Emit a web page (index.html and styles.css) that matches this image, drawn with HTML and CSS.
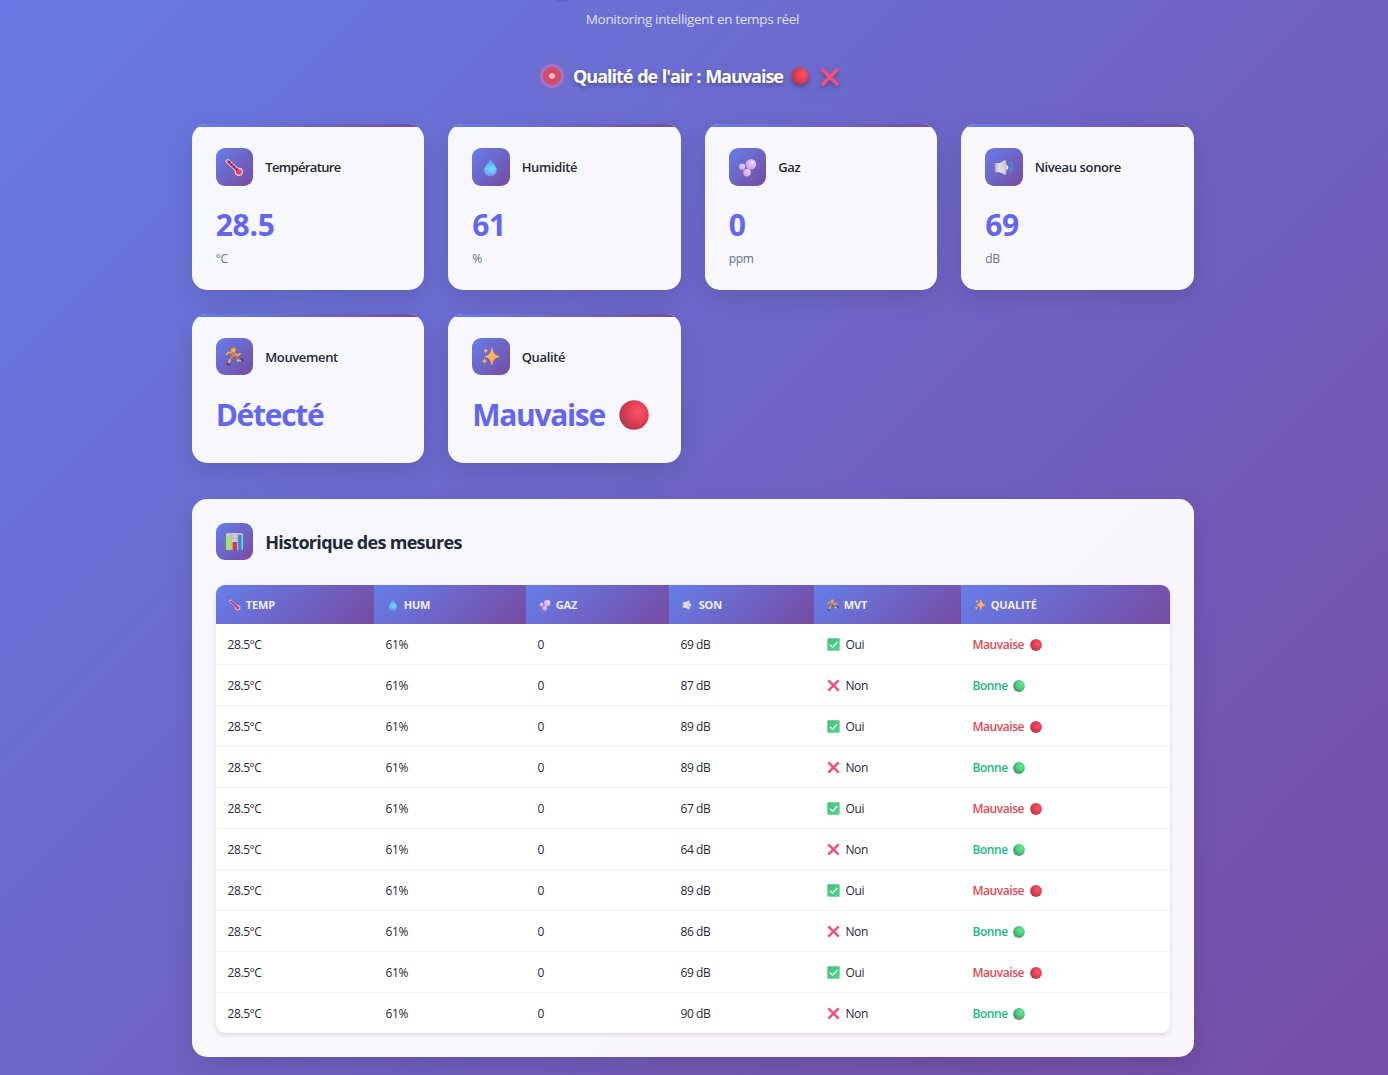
FILE: index.html
```html
<!DOCTYPE html>
<html lang="fr">
<head>
<meta charset="utf-8">
<title>Qualité de l'air</title>
<link rel="stylesheet" href="styles.css">
</head>
<body>
<svg class="sprite" width="0" height="0" aria-hidden="true">
  <defs>
    <radialGradient id="g-red" cx=".65" cy=".4" r=".68"><stop offset="0" stop-color="#fb5467"/><stop offset=".6" stop-color="#dd3c50"/><stop offset="1" stop-color="#ab3a4e"/></radialGradient>
    <radialGradient id="g-green" cx=".65" cy=".35" r=".7"><stop offset="0" stop-color="#65ec8f"/><stop offset=".55" stop-color="#4dc87c"/><stop offset="1" stop-color="#478a6b"/></radialGradient>
    <linearGradient id="g-drop" x1="0" y1="0" x2="0" y2="1"><stop offset="0" stop-color="#4a9fe0"/><stop offset=".55" stop-color="#62cdfb"/><stop offset="1" stop-color="#7b8df5"/></linearGradient>
    <radialGradient id="g-bubble" cx=".65" cy=".35" r=".75"><stop offset="0" stop-color="#e2dcfa"/><stop offset=".5" stop-color="#d2b3ee"/><stop offset="1" stop-color="#f29ce0"/></radialGradient>
    <linearGradient id="g-star" x1="0" y1="0" x2="1" y2="1"><stop offset="0" stop-color="#ffc55a"/><stop offset="1" stop-color="#ff9f55"/></linearGradient>
    <linearGradient id="g-horn" x1="0" y1="0" x2="1" y2="0"><stop offset="0" stop-color="#b3a9b9"/><stop offset=".4" stop-color="#e5e0e8"/><stop offset="1" stop-color="#d2cad8"/></linearGradient>
    <linearGradient id="g-check" x1="0" y1="0" x2="1" y2="1"><stop offset="0" stop-color="#4bbd80"/><stop offset="1" stop-color="#48d989"/></linearGradient>
  </defs>
  <symbol id="thermo" viewBox="0 0 20 20">
    <path d="M3 3.4 13.8 13.6" stroke="#e6dcf5" stroke-width="4.6" stroke-linecap="round"/>
    <circle cx="14.6" cy="14.6" r="4.3" fill="#e6dcf5"/>
    <path d="M3.1 3.5 14 14" stroke="#e2365f" stroke-width="2.8" stroke-linecap="round"/>
    <circle cx="14.6" cy="14.6" r="3.1" fill="#f3345c"/>
    <path d="M5.4 3.500 3.600 5.200M8 6 6.300 7.700M10.600 8.500 8.900 10.200M13.200 11l-1.700 1.700" stroke="#4a2b72" stroke-width="1.4"/>
    <circle cx="15.3" cy="13.5" r=".8" fill="#ff829b"/>
  </symbol>
  <symbol id="drop" viewBox="0 0 20 20">
    <path d="M10 .8C8 5 3.4 9 3.4 13a6.6 6.4 0 0 0 13.2 0C16.600 9 12 5 10 .8Z" fill="url(#g-drop)"/>
    <ellipse cx="11.500" cy="12" rx="3" ry="4" fill="#86dcff" opacity=".5"/>
  </symbol>
  <symbol id="bubbles" viewBox="0 0 20 20">
    <circle cx="13.700" cy="6.600" r="5.500" fill="url(#g-bubble)"/>
    <circle cx="4.300" cy="9.100" r="3.300" fill="url(#g-bubble)"/>
    <circle cx="9.500" cy="15.400" r="4" fill="url(#g-bubble)"/>
    <circle cx="15" cy="4.800" r="1.400" fill="#f5efff" opacity=".8"/>
  </symbol>
  <symbol id="speaker" viewBox="0 0 20 20">
    <path d="M.8 5.200h5.200L11.800 2.200v15.600L6 14.900H.8Z" fill="url(#g-horn)"/>
    <path d="M11.600 2.100q1.700 0 1.700 7.900t-1.700 7.900Z" fill="#c6bccc"/>
    <path d="M12.800 7.600a2.400 2.400 0 0 1 0 4.800Z" fill="#eee9f1"/>
    <path d="M15.800 5.600c1.700 2.700 1.700 6.200 0 8.900M17.800 3.700c2 3.700 2 8.900 0 12.600" fill="none" stroke="#389be8" stroke-width="1.100" stroke-linecap="round"/>
  </symbol>
  <symbol id="runner" viewBox="0 0 20 20">
    <path d="m7.400 11.500-3 3.700-1.200 2.700M11 11.400l3 3.300 3.300-1" fill="none" stroke="#f7b64f" stroke-width="2" stroke-linejoin="round"/>
    <path d="M7.300 5.700 3.600 5.900 1.500 7.900M10.800 7l2.600 2.200 2.500-2.300" fill="none" stroke="#f7ad42" stroke-width="1.800" stroke-linejoin="round" stroke-linecap="round"/>
    <path d="m6.700 4.700 4 1 1 5.500-3.600 2.100-2.500-2 1.500-3.600Z" fill="#f07347"/>
    <path d="m8 10.500 3.400-.5 1.600 3.500-1.800.8-2.600-1.500-1.800 1.800-1.200-1Z" fill="#637193"/>
    <circle cx="8.900" cy="3" r="2.500" fill="#ffb638"/>
    <path d="M6.400 2.300Q7 0 9.300.3q2.100 0 2.200 2L8 2Z" fill="#d58a2b"/>
    <path d="m2 17.100 2.700 1.600M16.800 12.500l2 1.800" stroke="#4c3b62" stroke-width="1.800" stroke-linecap="round"/>
  </symbol>
  <symbol id="sparkles" viewBox="0 0 20 20" fill="url(#g-star)">
    <path d="M12 1.300c1 5.400 2.200 6.700 7.300 8.100.6.200.6.900 0 1.100-5.100 1.400-6.300 2.700-7.300 8.100-.1.600-.9.600-1 0-1-5.400-2.200-6.700-6.300-8.100-.6-.2-.6-.9 0-1.100 4.100-1.400 5.300-2.700 6.300-8.100.1-.600.9-.600 1 0Z"/>
    <path d="M5 .8c.4 2 .9 2.500 2.600 3-.1.500-2.100.8-2.600 3-.5-2.200-2.200-2.500-2.600-3 1.700-.5 2.200-1 2.600-3ZM3.800 11.300c.5 2.300 1 2.800 3 3.300-.3.500-2.400 1-3 3.400-.6-2.400-2.700-2.900-3-3.400 2-.5 2.500-1 3-3.300Z"/>
  </symbol>
  <symbol id="chart" viewBox="0 0 20 20">
    <rect x="1" y="1" width="18" height="18" rx="2" fill="#cfc6d8"/>
    <path d="M1 6.500h18M1 12.500h18M7 1v18M13.300 1v18" stroke="#a89bb5" stroke-width=".6"/>
    <path d="M2 4.500h5V19H3a2 2 0 0 1-2-2V5.500a1 1 0 0 1 1-1Z" fill="#9be26f"/>
    <path d="M8 10.500h4.600V19H8Z" fill="#da315f"/>
    <path d="M13.800 3H18v16h-4.200Z" fill="#298ddb"/>
    <path d="M16.800 3H18v16h-1.200Z" fill="#46b7f0"/>
  </symbol>
  <symbol id="cross" viewBox="0 0 20 20"><path d="m2 2 16 16m0-16-16 16" stroke="#f5507b" stroke-width="3.800"/></symbol>
  <symbol id="check" viewBox="0 0 20 20"><rect x=".5" y=".5" width="19" height="19" rx="1.500" fill="url(#g-check)"/><path d="m4.500 10.200 4 4 7.500-8" fill="none" stroke="#f1fff6" stroke-width="2"/></symbol>
  <symbol id="red" viewBox="0 0 20 20"><circle cx="10" cy="10" r="9.800" fill="url(#g-red)"/></symbol>
  <symbol id="green" viewBox="0 0 20 20"><circle cx="10" cy="10" r="9.800" fill="url(#g-green)"/></symbol>
</svg>

<header class="page-header">
  <span class="title-mark"></span>
  <p class="subtitle">Monitoring intelligent en temps réel</p>
  <div class="status">
    <span class="status-dot"></span>
    <span class="status-text">Qualité de l'air : Mauvaise</span>
    <svg class="status-ball"><use href="#red"/></svg>
    <svg class="status-cross"><use href="#cross"/></svg>
  </div>
</header>

<main class="container">
  <section class="cards">
    <article class="card">
      <div class="card-head"><span class="tile"><svg><use href="#thermo"/></svg></span><h3 class="label label-tight">Température</h3></div>
      <div class="value">28.5</div><div class="unit">°C</div>
    </article>
    <article class="card">
      <div class="card-head"><span class="tile"><svg><use href="#drop"/></svg></span><h3 class="label">Humidité</h3></div>
      <div class="value">61</div><div class="unit">%</div>
    </article>
    <article class="card">
      <div class="card-head"><span class="tile"><svg><use href="#bubbles"/></svg></span><h3 class="label">Gaz</h3></div>
      <div class="value">0</div><div class="unit">ppm</div>
    </article>
    <article class="card">
      <div class="card-head"><span class="tile"><svg><use href="#speaker"/></svg></span><h3 class="label">Niveau sonore</h3></div>
      <div class="value">69</div><div class="unit">dB</div>
    </article>
    <article class="card">
      <div class="card-head"><span class="tile"><svg><use href="#runner"/></svg></span><h3 class="label">Mouvement</h3></div>
      <div class="value value-word">Détecté</div>
    </article>
    <article class="card">
      <div class="card-head"><span class="tile"><svg><use href="#sparkles"/></svg></span><h3 class="label">Qualité</h3></div>
      <div class="value value-word">Mauvaise<svg class="value-ball"><use href="#red"/></svg></div>
    </article>
  </section>

  <section class="history">
    <div class="card-head"><span class="tile"><svg><use href="#chart"/></svg></span><h2 class="history-title">Historique des mesures</h2></div>
    <div class="table-wrap">
      <table>
        <colgroup><col class="c1"><col class="c2"><col class="c3"><col class="c4"><col class="c5"><col class="c6"></colgroup>
        <thead><tr>
          <th><svg><use href="#thermo"/></svg>TEMP</th>
          <th><svg><use href="#drop"/></svg>HUM</th>
          <th><svg><use href="#bubbles"/></svg>GAZ</th>
          <th><svg><use href="#speaker"/></svg>SON</th>
          <th><svg><use href="#runner"/></svg>MVT</th>
          <th><svg><use href="#sparkles"/></svg>QUALITÉ</th>
        </tr></thead>
        <tbody>
          <tr><td>28.5°C</td><td>61%</td><td>0</td><td>69 dB</td><td><svg class="mark"><use href="#check"/></svg>Oui</td><td class="bad">Mauvaise<svg><use href="#red"/></svg></td></tr>
          <tr><td>28.5°C</td><td>61%</td><td>0</td><td>87 dB</td><td><svg class="mark"><use href="#cross"/></svg>Non</td><td class="good">Bonne<svg><use href="#green"/></svg></td></tr>
          <tr><td>28.5°C</td><td>61%</td><td>0</td><td>89 dB</td><td><svg class="mark"><use href="#check"/></svg>Oui</td><td class="bad">Mauvaise<svg><use href="#red"/></svg></td></tr>
          <tr><td>28.5°C</td><td>61%</td><td>0</td><td>89 dB</td><td><svg class="mark"><use href="#cross"/></svg>Non</td><td class="good">Bonne<svg><use href="#green"/></svg></td></tr>
          <tr><td>28.5°C</td><td>61%</td><td>0</td><td>67 dB</td><td><svg class="mark"><use href="#check"/></svg>Oui</td><td class="bad">Mauvaise<svg><use href="#red"/></svg></td></tr>
          <tr><td>28.5°C</td><td>61%</td><td>0</td><td>64 dB</td><td><svg class="mark"><use href="#cross"/></svg>Non</td><td class="good">Bonne<svg><use href="#green"/></svg></td></tr>
          <tr><td>28.5°C</td><td>61%</td><td>0</td><td>89 dB</td><td><svg class="mark"><use href="#check"/></svg>Oui</td><td class="bad">Mauvaise<svg><use href="#red"/></svg></td></tr>
          <tr><td>28.5°C</td><td>61%</td><td>0</td><td>86 dB</td><td><svg class="mark"><use href="#cross"/></svg>Non</td><td class="good">Bonne<svg><use href="#green"/></svg></td></tr>
          <tr><td>28.5°C</td><td>61%</td><td>0</td><td>69 dB</td><td><svg class="mark"><use href="#check"/></svg>Oui</td><td class="bad">Mauvaise<svg><use href="#red"/></svg></td></tr>
          <tr><td>28.5°C</td><td>61%</td><td>0</td><td>90 dB</td><td><svg class="mark"><use href="#cross"/></svg>Non</td><td class="good">Bonne<svg><use href="#green"/></svg></td></tr>
        </tbody>
      </table>
    </div>
  </section>
</main>
</body>
</html>
```
FILE: styles.css
```css
* { box-sizing: border-box; margin: 0; padding: 0; }

body {
  height: 1075px;
  overflow: hidden;
  background: #764ba2 linear-gradient(135deg, #667eea 0%, #764ba2 100%) 0 -170px / 100% 1310px no-repeat;
  font-family: "Open Sans", "Noto Sans", sans-serif;
  color: #1f2937;
}

.sprite { position: absolute; }

.page-header {
  position: relative;
  height: 124.300px;
  padding: 9px 3px 0 0;
  text-align: center;
  color: #fff;
}

.title-mark {
  position: absolute;
  left: 553px;
  top: -20px;
  width: 20px;
  height: 18px;
  border-radius: 50%;
  box-shadow: 0 1px 3px 1px rgba(25, 20, 80, .7);
}

.subtitle {
  font-size: 13.5px;
  line-height: 20px;
  font-weight: 400;
  letter-spacing: -0.33px;
  color: rgba(255, 255, 255, .82);
}

.status {
  display: flex;
  align-items: center;
  margin: 33.500px 0 0 543px;
  height: 27px;
}

.status-dot {
  width: 18px;
  height: 18px;
  border-radius: 50%;
  background: radial-gradient(circle, #efb7cd 0 2.500px, #d94b63 3.300px);
  box-shadow: 0 0 0 3px rgba(175, 120, 200, .75), 0 0 14px 4px rgba(217, 75, 99, .18);
}

.status-text {
  width: 210px;
  margin-left: 12px;
  text-align: left;
  white-space: nowrap;
  font-size: 18px;
  line-height: 27px;
  font-weight: 700;
  letter-spacing: -1px;
  word-spacing: 1px;
  text-shadow: 0 2px 4px rgba(0, 0, 0, .3);
}

.status svg { filter: drop-shadow(0 2px 2px rgba(0, 0, 0, .3)); }
.status-ball { width: 18px; height: 18px; margin-left: 7.500px; }
.status-cross { width: 20px; height: 20px; margin-left: 11px; margin-top: 1px; }

.container { padding: 0 194.300px 0 191.700px; }

.cards {
  display: grid;
  grid-template-columns: repeat(4, 1fr);
  grid-template-rows: 165.500px 149px;
  gap: 24px;
}

.card,
.history {
  background: rgba(255, 255, 255, .95);
  border-radius: 15px;
  box-shadow: 0 8px 24px rgba(0, 0, 0, .12);
}

.card {
  position: relative;
  overflow: hidden;
  padding: 24px;
}

.card::before {
  content: "";
  position: absolute;
  left: 0;
  right: 0;
  top: 0;
  height: 3px;
  background: linear-gradient(135deg, #667eea, #764ba2);
}

.card-head { display: flex; align-items: center; gap: 12px; height: 37.500px; }

.tile {
  display: flex;
  align-items: center;
  justify-content: center;
  width: 37.500px;
  height: 37.500px;
  border-radius: 9px;
  background: linear-gradient(135deg, #667eea, #764ba2);
}

.tile svg { width: 19px; height: 19px; }

.label {
  font-size: 13px;
  font-weight: 600;
  letter-spacing: -0.36px;
}

.label-tight { letter-spacing: -0.64px; }

.value {
  display: flex;
  align-items: center;
  height: 36px;
  margin-top: 21.500px;
  font-size: 30px;
  font-weight: 700;
  line-height: 36px;
  letter-spacing: -0.3px;
  color: #6366f1;
}

.value-word { letter-spacing: -1.3px; }

.value-ball { width: 30px; height: 30px; margin-left: 14.500px; }

.unit {
  margin-top: 7.500px;
  font-size: 12px;
  line-height: 16px;
  font-weight: 500;
  letter-spacing: -0.3px;
  color: #64748b;
}

.history {
  height: 558px;
  margin-top: 36px;
  padding: 24px;
}

.history-title { font-size: 18px; font-weight: 700; letter-spacing: -0.7px; }

.table-wrap {
  margin-top: 24.700px;
  border-radius: 9px;
  overflow: hidden;
  background: #fff;
  box-shadow: 0 2px 5px rgba(0, 0, 0, .12);
}

table { width: 100%; table-layout: fixed; border-collapse: separate; border-spacing: 0; }
.c1 { width: 158px; }
.c2 { width: 152px; }
.c3 { width: 143px; }
.c4 { width: 145px; }
.c5 { width: 147px; }
.c6 { width: 209px; }

th {
  height: 39px;
  padding: 0 12px;
  text-align: left;
  font-size: 11px;
  font-weight: 700;
  letter-spacing: -0.15px;
  color: #f3f0ff;
  background: linear-gradient(135deg, #667eea, #764ba2);
}

th svg { width: 12px; height: 12px; margin: 0 5px 0 1px; vertical-align: -2px; }

td {
  height: 41px;
  padding: 2px 12px 0 11.800px;
  border-bottom: 1px solid #f1f2f6;
  font-size: 12px;
  letter-spacing: -0.4px;
}

tr:last-child td { height: 40px; border-bottom: 0; }

td svg { width: 12px; height: 12px; margin-left: 5.500px; vertical-align: -2px; }
td .mark { width: 13px; height: 13px; margin: 0 5px 0 2px; vertical-align: -2px; }
.bad, .good { font-weight: 600; letter-spacing: -0.45px; }
.bad { color: #e54850; }
.good { color: #18b981; }
```
